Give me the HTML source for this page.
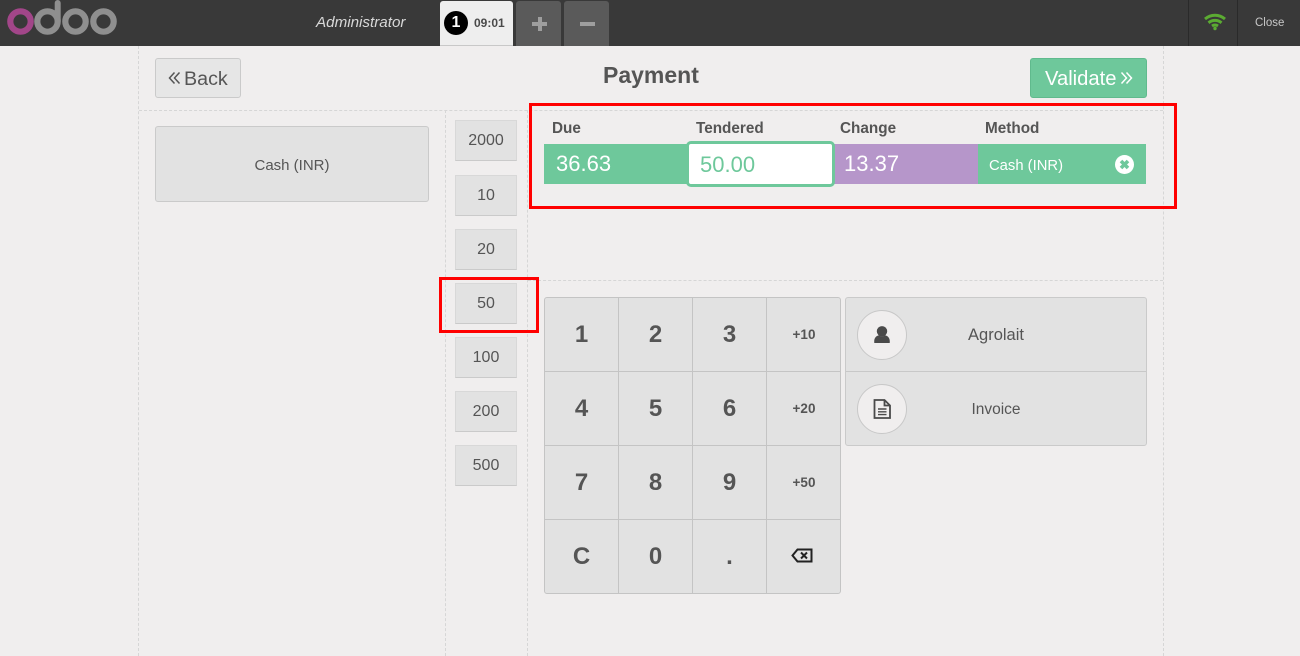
<!DOCTYPE html>
<html><head><meta charset="utf-8"><style>
html,body{margin:0;padding:0;width:1300px;height:656px;overflow:hidden;background:#f0eeee;font-family:"Liberation Sans",sans-serif;color:#555}
div,span{position:absolute;box-sizing:border-box}
.c{display:flex;align-items:center;justify-content:center}
.top{left:0;top:0;width:1300px;height:46px;background:#393939}
.dv{border-left:1px dashed #d6d6d6}.dh{border-top:1px dashed #d6d6d6}
.btn{background:#e2e2e2;border:1px solid #cacaca;border-radius:3px}
.q{left:455px;width:62px;height:41px;font-size:16px;padding-top:1px;background:#e2e2e2;border:1px solid #d8d8d8;border-bottom-color:#cacaca}
.lb{top:120px;font-size:15.300px;font-weight:bold;color:#555;line-height:18px}
.n{width:74px;height:74px;border-right:1px solid #c4c4c4;border-bottom:1px solid #c4c4c4;font-size:24px;font-weight:bold;color:#555}
.s{font-size:13.500px}
.ci{width:50px;height:50px;left:857px;border-radius:50%;background:#f0eeee;border:1px solid #c8c8c8}
.red{border:3px solid #f00;pointer-events:none}
</style></head><body>
<div class="top"></div>
<svg style="position:absolute;left:0;top:0" width="125" height="40" viewBox="0 0 125 40" fill="none">
<circle cx="20.500" cy="21.500" r="10.200" stroke="#a24689" stroke-width="6.200"/>
<circle cx="47.500" cy="21.500" r="10.200" stroke="#8f8f8f" stroke-width="6.200"/>
<path d="M57.700 21V3" stroke="#8f8f8f" stroke-width="6" stroke-linecap="round"/>
<circle cx="75.500" cy="21.500" r="10.200" stroke="#8f8f8f" stroke-width="6.200"/>
<circle cx="103.500" cy="21.500" r="10.200" stroke="#8f8f8f" stroke-width="6.200"/>
</svg>
<div style="left:316px;top:14px;font-size:15.200px;font-style:italic;color:#d8d8d8;line-height:18px">Administrator</div>
<div style="left:440px;top:1px;width:73px;height:45px;background:#eee;border-radius:3px 3px 0 0;border-bottom:1px solid #c8c8c8"></div>
<div class="c" style="left:444px;top:11px;width:24px;height:24px;border-radius:50%;background:#000;color:#fff;font-weight:bold;font-size:16px">1</div>
<div style="left:474px;top:16px;font-size:12px;font-weight:bold;color:#4a4a4a;line-height:14px">09:01</div>
<div style="left:516px;top:1px;width:45px;height:45px;background:#5a5a5a;border-radius:3px 3px 0 0"></div>
<div style="left:564px;top:1px;width:45px;height:45px;background:#5a5a5a;border-radius:3px 3px 0 0"></div>
<div style="left:532px;top:21.500px;width:15px;height:4px;background:#9e9e9e"></div>
<div style="left:537.500px;top:17px;width:4px;height:14px;background:#9e9e9e"></div>
<div style="left:580px;top:21.500px;width:15px;height:4px;background:#9e9e9e"></div>
<div style="left:1188px;top:0;width:1px;height:46px;background:#2a2a2a"></div>
<div style="left:1237px;top:0;width:1px;height:46px;background:#2a2a2a"></div>
<svg style="position:absolute;left:1203px;top:13px" width="24" height="18" viewBox="0 0 24 18" fill="none" stroke="#5bab32" stroke-width="3">
<path d="M2 6C8 1 16 1 22 6"/><path d="M5.500 9.800C9.500 6.600 14.500 6.600 18.500 9.800"/><path d="M9 13C11 11.700 13 11.700 15 13"/><circle cx="12" cy="15.500" r="1.700" fill="#5bab32" stroke="none"/>
</svg>
<div style="left:1255px;top:16px;font-size:11.500px;color:#c8c8c8;line-height:15px">Close</div>

<div class="dv" style="left:138px;top:46px;height:610px"></div>
<div class="dv" style="left:1163px;top:46px;height:610px"></div>
<div class="dv" style="left:445px;top:110px;height:546px"></div>
<div class="dv" style="left:527px;top:110px;height:546px"></div>
<div class="dh" style="left:139px;top:110px;width:1024px"></div>
<div class="dh" style="left:528px;top:280px;width:635px"></div>

<div class="btn" style="left:155px;top:58px;width:86px;height:40px;background:#e6e6e6"></div>
<svg style="position:absolute;left:168px;top:71px" width="13" height="14" viewBox="0 0 13 14" fill="none" stroke="#555" stroke-width="1.500"><path d="M6.500 1.500L1.500 7L6.500 12.500M11.500 1.500L6.500 7L11.500 12.500"/></svg>
<div style="left:184px;top:67px;font-size:19.700px;line-height:24px;color:#555">Back</div>
<div style="left:603px;top:61px;font-size:23px;font-weight:bold;line-height:29px;color:#555">Payment</div>
<div style="left:1030px;top:58px;width:117px;height:40px;background:#6ec89b;border:1px solid #60ba8d;border-radius:3px"></div>
<div style="left:1045px;top:67px;font-size:20.200px;line-height:24px;color:#fff">Validate</div>
<svg style="position:absolute;left:1120px;top:71px" width="13" height="14" viewBox="0 0 13 14" fill="none" stroke="#fff" stroke-width="1.500"><path d="M1.500 1.500L6.500 7L1.500 12.500M6.500 1.500L11.500 7L6.500 12.500"/></svg>

<div class="btn c" style="left:155px;top:126px;width:274px;height:76px;font-size:15px;padding-top:3px">Cash (INR)</div>

<div class="q c" style="top:120px">2000</div>
<div class="q c" style="top:175px">10</div>
<div class="q c" style="top:229px">20</div>
<div class="q c" style="top:283px">50</div>
<div class="q c" style="top:337px">100</div>
<div class="q c" style="top:391px">200</div>
<div class="q c" style="top:445px">500</div>

<div class="lb" style="left:552px">Due</div>
<div class="lb" style="left:696px">Tendered</div>
<div class="lb" style="left:840px">Change</div>
<div class="lb" style="left:985px">Method</div>
<div style="left:544px;top:144px;width:144px;height:40px;background:#6ec89b;color:#fff;font-size:22px;line-height:40px;padding-left:12px">36.63</div>
<div style="left:833px;top:144px;width:145px;height:40px;background:#b696ca;color:#fff;font-size:22px;line-height:40px;padding-left:11px">13.37</div>
<div style="left:978px;top:144px;width:168px;height:40px;background:#6ec89b;color:#fff;font-size:14.800px;line-height:44px;padding-left:11px">Cash (INR)</div>
<div style="left:686px;top:141px;width:149px;height:46px;background:#fff;border:3px solid #6ec89b;border-radius:5px;color:#6ec89b;font-size:22px;line-height:41px;padding-left:11px">50.00</div>
<svg style="position:absolute;left:1114px;top:154px" width="21" height="21" viewBox="0 0 21 21"><circle cx="10.500" cy="10.500" r="9.500" fill="#fff"/><path d="M7 7L14 14M14 7L7 14" stroke="#6ec89b" stroke-width="3.600"/></svg>

<div style="left:544px;top:297px;width:297px;height:297px;background:#e2e2e2;border:1px solid #c4c4c4;border-radius:3px;overflow:hidden"></div>
<div class="n c" style="left:545px;top:298px">1</div><div class="n c" style="left:619px;top:298px">2</div><div class="n c" style="left:693px;top:298px">3</div><div class="n c s" style="left:767px;top:298px;border-right:0">+10</div>
<div class="n c" style="left:545px;top:372px">4</div><div class="n c" style="left:619px;top:372px">5</div><div class="n c" style="left:693px;top:372px">6</div><div class="n c s" style="left:767px;top:372px;border-right:0">+20</div>
<div class="n c" style="left:545px;top:446px">7</div><div class="n c" style="left:619px;top:446px">8</div><div class="n c" style="left:693px;top:446px">9</div><div class="n c s" style="left:767px;top:446px;border-right:0">+50</div>
<div class="n c" style="left:545px;top:520px;border-bottom:0">C</div><div class="n c" style="left:619px;top:520px;border-bottom:0">0</div><div class="n c" style="left:693px;top:520px;border-bottom:0">.</div>
<svg style="position:absolute;left:791px;top:548px" width="22" height="15" viewBox="0 0 22 15" fill="none" stroke="#222" stroke-width="2"><path d="M6.500 1.500H20.500V13.500H6.500L1.500 7.500Z"/><path d="M10 4.500L16 10.500M16 4.500L10 10.500"/></svg>

<div class="btn" style="left:845px;top:297px;width:302px;height:149px"></div>
<div style="left:846px;top:371px;width:300px;height:1px;background:#c8c8c8"></div>
<div class="ci" style="top:310px"></div>
<div class="ci" style="top:384px"></div>
<svg style="position:absolute;left:873px;top:325px" width="18" height="19" viewBox="0 0 18 19" fill="#4a4a4a"><circle cx="9" cy="6.300" r="5.200"/><path d="M1.300 18C.8 13.500 2.500 11 6 10.200C8 11.700 10 11.700 12 10.200C15.500 11 17.200 13.500 16.700 18Z"/></svg>
<svg style="position:absolute;left:873px;top:398px" width="19" height="22" viewBox="0 0 19 22" fill="none" stroke="#4a4a4a" stroke-width="1.800"><path d="M1.500 2H11.500L17 7.500V20H1.500Z"/><path d="M11.500 2V7.500H17"/><path d="M5 11H13.500M5 13.800H13.500M5 16.600H13.500" stroke-width="1.400"/></svg>
<div class="c" style="left:845px;top:298px;width:302px;height:74px;font-size:16.500px">Agrolait</div>
<div class="c" style="left:845px;top:372px;width:302px;height:75px;font-size:15.500px">Invoice</div>

<div class="red" style="left:529px;top:103px;width:648px;height:106px"></div>
<div class="red" style="left:439px;top:277px;width:100px;height:56px"></div>
</body></html>
